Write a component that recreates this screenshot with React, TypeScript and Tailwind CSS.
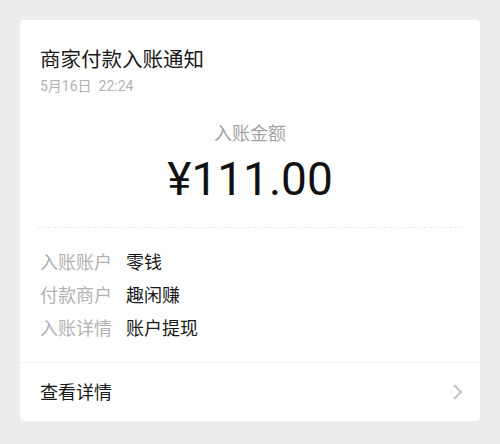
import React from "react";

const cjk = "font-['Roboto','Noto_Sans_CJK_SC',sans-serif]";

const rows = [
  { label: "入账账户", value: "零钱" },
  { label: "付款商户", value: "趣闲赚" },
  { label: "入账详情", value: "账户提现" },
];

export default function App() {
  return (
    <div className={`w-[500px] h-[444px] bg-[#ededed] pt-[20px] px-[20px] ${cjk}`}>
      <div className="bg-white rounded-[4px] h-[401px] flex flex-col">
        <div className="px-[20px] pt-[26px]">
          <div className="text-[20.5px] leading-[28px] text-[#191919]">商家付款入账通知</div>
          <div className="mt-[3px] text-[14px] leading-[18px] text-[#b2b2b2]">5月16日&nbsp;&nbsp;22:24</div>
        </div>

        <div className="mt-[27px] flex flex-col items-center">
          <div className="text-[18px] leading-[24px] text-[#a3a3a3]">入账金额</div>
          <div className="mt-[5px] text-[46px] leading-[56px] text-[#111]">¥111.00</div>
        </div>

        <div className="mx-[18px] mt-[20px] border-t border-dashed border-[#ececec]" />

        <div className="px-[20px] mt-[18px] mb-[17px]">
          {rows.map((r) => (
            <div key={r.label} className="flex h-[33px] items-center text-[18px]">
              <span className="w-[86px] text-[#b2b2b2]">{r.label}</span>
              <span className="text-[#191919]">{r.value}</span>
            </div>
          ))}
        </div>

        <div className="border-t border-[#f2f2f2]" />

        <div className="flex-1 flex items-center justify-between pl-[20px] pr-[17px]">
          <span className="text-[18px] text-[#191919]">查看详情</span>
          <svg width="11" height="18" viewBox="0 0 11 18" fill="none">
            <polyline points="2,2 9,9 2,16" stroke="#c4c4c4" strokeWidth="2" />
          </svg>
        </div>
      </div>
    </div>
  );
}
